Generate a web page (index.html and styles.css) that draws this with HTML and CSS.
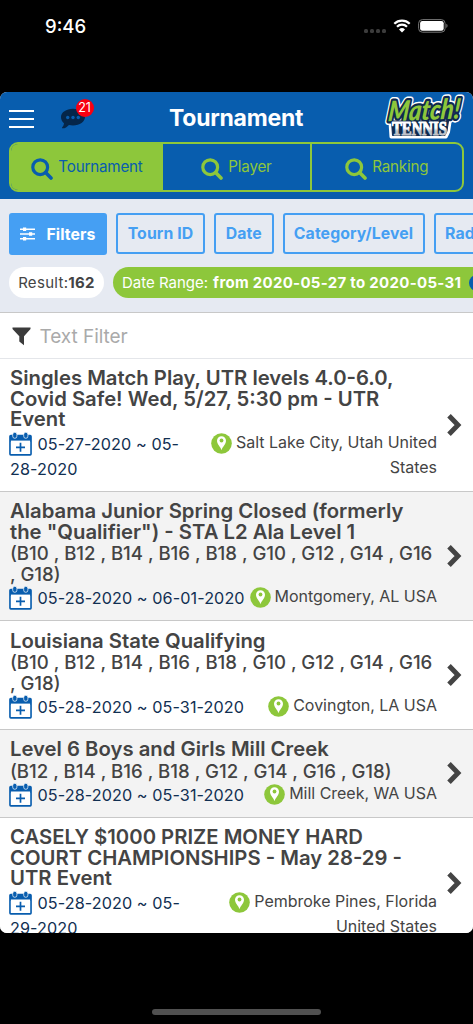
FILE: index.html
```html
<!DOCTYPE html>
<html lang="en">
<head>
<meta charset="utf-8">
<meta name="viewport" content="width=device-width, initial-scale=1">
<title>Tournament</title>
<link rel="stylesheet" href="styles.css">
</head>
<body>
<svg class="defs" aria-hidden="true">
  <symbol id="search" viewBox="0 0 22 22"><circle cx="9.2" cy="9.2" r="7.4" fill="none" stroke="currentColor" stroke-width="3.2"/><path d="M14.6 14.6 20 20" stroke="currentColor" stroke-width="3.6" stroke-linecap="round"/></symbol>
  <symbol id="calendar" viewBox="0 0 23 24"><path d="M1 3.2h21V10H1z" fill="#085dae"/><rect x="1" y="3.6" width="21" height="19.2" rx=".8" fill="none" stroke="#085dae" stroke-width="1.7"/><rect x="3.7" y=".3" width="4.2" height="6" rx="2.1" fill="#085dae" stroke="#fff" stroke-width=".7"/><rect x="14.7" y=".3" width="4.2" height="6" rx="2.1" fill="#085dae" stroke="#fff" stroke-width=".7"/><path d="M1.9 8.6h19.2v13.2H1.9z" fill="#fff"/><path d="M11.5 10.8v9M7 15.3h9" stroke="#085dae" stroke-width="1.7"/></symbol>
  <symbol id="pin" viewBox="0 0 21 21"><circle cx="10.5" cy="10.5" r="10.3" fill="#8dc73b"/><path d="M10.5 17.2C9.6 13.9 6 11.4 6 7.8a4.5 4.5 0 0 1 9 0c0 3.6-3.6 6.1-4.5 9.4z" fill="#fff"/><circle cx="10.5" cy="7.5" r="1.9" fill="#8dc73b"/></symbol>
  <symbol id="chevron" viewBox="0 0 15 22"><path d="M2 1.7 11 11 2 20.3" fill="none" stroke="#444" stroke-width="4.9"/></symbol>
</svg>
<header class="status">
  <span class="clock">9:46</span>
  <span class="indicators">
    <span class="cell"><i></i><i></i><i></i><i></i></span>
    <svg class="wifi" viewBox="0 0 18 14"><path d="M1.3 4.7a11 11 0 0 1 15.4 0M4 7.7a7.1 7.1 0 0 1 10 0" fill="none" stroke="#fff" stroke-width="2.2"/><path d="M9 13.5 6 10.4a4.3 4.3 0 0 1 6 0z" fill="#fff"/></svg>
    <svg class="battery" viewBox="0 0 31 14"><rect x=".6" y=".6" width="26.5" height="12.6" rx="3.8" fill="none" stroke="#777" stroke-width="1"/><rect x="2.1" y="2" width="23.6" height="9.8" rx="2.3" fill="#fff"/><path d="M28.3 4.8c1.7.7 1.7 3.5 0 4.2z" fill="#777"/></svg>
  </span>
</header>

<main class="app">
  <section class="top">
    <div class="bar">
      <span class="menu"><i></i><i></i><i></i></span>
      <span class="chat">
        <svg viewBox="0 0 26 22"><path d="M13 .8c6.8 0 12 3.6 12 8.2s-5.2 8.4-12 8.4c-1.5 0-2.8-.2-4.1-.5-1.8 2-4 3.5-6.4 3.4-.6 0-.8-.5-.4-.9 1-1 1.7-2.4 1.900-4.200C2 13.600 1 11.500 1 9 1 4.400 6.200.8 13 .8z" fill="#05264a"/><g fill="#085dae"><circle cx="7.700" cy="9.500" r="1.700"/><circle cx="13" cy="9.500" r="1.700"/><circle cx="18.300" cy="9.500" r="1.700"/></g></svg>
        <b class="badge">21</b>
      </span>
      <h1>Tournament</h1>
      <svg class="logo" viewBox="0 0 84 46">
        <defs>
          <linearGradient id="steel" x1="0" y1="0" x2="0" y2="1"><stop offset=".45" stop-color="#fff"/><stop offset=".6" stop-color="#bfc2c9"/></linearGradient>
        </defs>
        <path d="M10 29h60l-1.500 10-2.500 5H11z" fill="#fff" stroke="#fff" stroke-width="3" stroke-linejoin="round"/>
        <text x="7" y="27" class="script" transform="rotate(-2 40 20) translate(4 0) skewX(-8)" textLength="72" lengthAdjust="spacingAndGlyphs" stroke="#fff" stroke-width="7.500" fill="#fff">Match!</text>
        <path d="M11.500 28h57l-1.500 10-2 4.500H12.500z" fill="#10294f" stroke="#10294f" stroke-linejoin="round"/>
        <text x="7" y="27" class="script" transform="rotate(-2 40 20) translate(4 0) skewX(-8)" textLength="72" lengthAdjust="spacingAndGlyphs" stroke="#10294f" stroke-width="4.500" fill="#10294f">Match!</text>
        <text x="12" y="42" class="tennis" textLength="55" lengthAdjust="spacingAndGlyphs" fill="url(#steel)" stroke="url(#steel)" stroke-width="1.100">TENNIS</text>
        <text x="7" y="27" class="script" transform="rotate(-2 40 20) translate(4 0) skewX(-8)" textLength="72" lengthAdjust="spacingAndGlyphs" fill="#8dc73b">Match!</text>
      </svg>
    </div>
    <nav class="tabs">
      <span class="tab on"><svg><use href="#search"/></svg><span>Tournament</span></span>
      <span class="tab"><svg><use href="#search"/></svg><span>Player</span></span>
      <span class="tab last"><svg><use href="#search"/></svg><span>Ranking</span></span>
    </nav>
  </section>

  <section class="filters">
    <div class="buttons">
      <span class="btn primary"><svg viewBox="0 0 15 14"><path d="M0 2.300h15M0 7h15M0 11.700h15" stroke="#fff" stroke-width="1.400"/><path d="M3 .5h3.200v3.600H3zM9 5.200h3.200v3.600H9zM3 9.900h3.200v3.600H3z" fill="#fff"/></svg>Filters</span>
      <span class="btn b-id">Tourn ID</span>
      <span class="btn b-date">Date</span>
      <span class="btn b-cat">Category/Level</span>
      <span class="btn b-rad">Radius</span>
    </div>
    <div class="chips">
      <span class="chip result">Result:<b>162</b></span>
      <span class="chip range"><span>Date Range:</span><b>from 2020-05-27 to 2020-05-31</b><i></i></span>
    </div>
  </section>

  <div class="search"><svg viewBox="0 0 19 19"><path d="M.5.500h18v1.600L12 9.200v9L7.300 14.500V9.200L.500 2.100z" fill="#3b3b3b"/></svg><span>Text Filter</span></div>

  <article class="row r1">
    <div class="body">
      <h2><span>Singles Match Play, UTR levels 4.0-6.0,</span><span>Covid Safe! Wed, 5/27, 5:30 pm - UTR</span><span>Event</span></h2>
      <div class="meta"><p class="date"><svg><use href="#calendar"/></svg>05-27-2020 ~ 05-<br>28-2020</p><p class="place"><svg><use href="#pin"/></svg>Salt Lake City, Utah United<br>States</p></div>
    </div>
    <svg class="chev"><use href="#chevron"/></svg>
  </article>
  <article class="row r2 alt">
    <div class="body">
      <h2><span>Alabama Junior Spring Closed (formerly</span><span>the "Qualifier") - STA L2 Ala Level 1</span></h2>
      <h3>(B10 , B12 , B14 , B16 , B18 , G10 , G12 , G14 , G16<br>, G18)</h3>
      <div class="meta"><p class="date"><svg><use href="#calendar"/></svg>05-28-2020 ~ 06-01-2020</p><p class="place"><svg><use href="#pin"/></svg>Montgomery, AL USA</p></div>
    </div>
    <svg class="chev"><use href="#chevron"/></svg>
  </article>
  <article class="row r3">
    <div class="body">
      <h2><span>Louisiana State Qualifying</span></h2>
      <h3>(B10 , B12 , B14 , B16 , B18 , G10 , G12 , G14 , G16<br>, G18)</h3>
      <div class="meta"><p class="date"><svg><use href="#calendar"/></svg>05-28-2020 ~ 05-31-2020</p><p class="place"><svg><use href="#pin"/></svg>Covington, LA USA</p></div>
    </div>
    <svg class="chev"><use href="#chevron"/></svg>
  </article>
  <article class="row r4 alt">
    <div class="body">
      <h2><span>Level 6 Boys and Girls Mill Creek</span></h2>
      <h3>(B12 , B14 , B16 , B18 , G12 , G14 , G16 , G18)</h3>
      <div class="meta"><p class="date"><svg><use href="#calendar"/></svg>05-28-2020 ~ 05-31-2020</p><p class="place"><svg><use href="#pin"/></svg>Mill Creek, WA USA</p></div>
    </div>
    <svg class="chev"><use href="#chevron"/></svg>
  </article>
  <article class="row r5">
    <div class="body">
      <h2><span>CASELY $1000 PRIZE MONEY HARD</span><span>COURT CHAMPIONSHIPS - May 28-29 -</span><span>UTR Event</span></h2>
      <div class="meta"><p class="date"><svg><use href="#calendar"/></svg>05-28-2020 ~ 05-<br>29-2020</p><p class="place"><svg><use href="#pin"/></svg>Pembroke Pines, Florida<br>United States</p></div>
    </div>
    <svg class="chev"><use href="#chevron"/></svg>
  </article>
</main>
<div class="home"></div>
</body>
</html>
```

FILE: styles.css
```css
* { box-sizing: border-box; margin: 0; padding: 0; }
html, body { width: 473px; height: 1024px; overflow: hidden; background: #000; }
body { font-family: Inter, "Liberation Sans", sans-serif; display: flex; flex-direction: column; color: #444; }
.defs { position: absolute; width: 0; height: 0; }

.status { height: 92px; flex: none; padding: 16px 25px 0 45px; display: flex; justify-content: space-between; align-items: flex-start; color: #fff; }
.clock { font-size: 18.5px; line-height: 21px; font-weight: 500; letter-spacing: 0; }
.indicators { display: flex; align-items: flex-start; padding-top: 3px; }
.cell { display: flex; gap: 2px; padding-top: 10px; margin-right: 7px; }
.cell i { width: 4px; height: 4px; border-radius: 1.500px; background: #3c3c3c; }
.wifi { width: 18px; height: 14px; margin-right: 7px; }
.battery { width: 31px; height: 14px; margin-right: -1px; }

.app { height: 840.500px; flex: none; border-radius: 7px; overflow: hidden; background: #fff; display: flex; flex-direction: column; }
.top { height: 107px; flex: none; background: #085dae; padding: 0 9px; }
.bar { height: 50px; display: flex; position: relative; }
.menu { width: 25px; margin-top: 18px; display: flex; flex-direction: column; gap: 6px; }
.menu i { height: 2px; background: #fff; }
.chat { position: relative; margin: 16px 0 0 26px; }
.chat svg { display: block; width: 26px; height: 22px; }
.badge { position: absolute; left: 15.500px; top: -9.500px; width: 18px; height: 18px; border-radius: 50%; background: #f80011; color: #fff; font-size: 12.500px; line-height: 18px; font-weight: 400; text-align: center; }
.bar h1 { margin-left: 83px; font-size: 23px; line-height: 52px; font-weight: 650; color: #fff; letter-spacing: -.25px; }
.logo { position: absolute; right: 0; top: 1px; width: 84px; height: 46px; overflow: visible; stroke-linejoin: round; }
.script { font-family: Lato, sans-serif; font-weight: 900; font-style: italic; font-size: 28px; }
.tennis { font-family: "Liberation Serif", serif; font-weight: 700; font-size: 18px; }

.tabs { height: 50px; display: flex; border: 2px solid #8dc73b; border-radius: 9px; overflow: hidden; width: 454.500px; }
.tab { flex: 0 0 147px; display: flex; justify-content: center; align-items: center; color: #8dc73b; font-size: 15.200px; letter-spacing: -.2px; padding-bottom: 1px; }
.tab.on { background: #8dc73b; color: #085dae; flex-basis: 152px; }
.tab.last { flex: 1; border-left: 2px solid #8dc73b; }
.tab svg { width: 22px; height: 22px; margin: 5px 5px 0 0; }

.filters { height: 114px; flex: none; padding: 14px 0 0 9px; background: #e6eaf2; border-bottom: 1px solid #c8c8c8; overflow: hidden; }
.buttons, .chips { display: flex; gap: 9px; width: 640px; }
.btn { height: 41px; border: 2px solid #459ff3; border-radius: 3px; color: #459ff3; font-size: 15.800px; font-weight: 650; letter-spacing: .1px; display: flex; justify-content: center; align-items: center; }
.btn.primary { width: 98px; height: 42px; background: #459ff3; color: #fff; gap: 11px; }
.btn.primary svg { width: 15px; height: 14px; }
.b-id { width: 89px; } .b-date { width: 59.500px; } .b-cat { width: 142px; } .b-rad { width: 76px; }
.chips { margin-top: 12px; }
.chip { height: 31px; border-radius: 16px; display: flex; align-items: center; font-size: 15px; }
.result { width: 95px; background: #fff; justify-content: center; letter-spacing: .3px; }
.range { background: #8dc73b; color: #fff; padding-left: 9px; width: 500px; }
.range b { margin-left: 5px; letter-spacing: .3px; }
.range i { width: 16px; height: 16px; border-radius: 50%; background: #085dae; margin-left: 8px; }
.chip b { font-weight: 650; }

.search { height: 46px; flex: none; display: flex; align-items: center; padding: 1px 0 0 11.500px; border-bottom: 1px solid #e4e6ea; font-size: 19px; letter-spacing: -.05px; color: #aaa; }
.search svg { width: 19px; height: 19px; margin-right: 9px; }

.row { flex: none; display: flex; align-items: center; border-bottom: 1px solid #c8c8c8; padding-right: 11px; background: #fff; }
.row.alt { background: #f3f3f3; }
.r1, .r5 { height: 132.500px; } .r2 { height: 129.800px; } .r3 { height: 108.300px; } .r4 { height: 88px; }
.body { align-self: stretch; width: 427px; margin-left: 10px; padding-top: 9.500px; white-space: nowrap; }
.r1 .body { padding-top: 9px; }
.chev { width: 15px; height: 22px; margin-left: auto; }
h2 { font-size: 20.300px; line-height: 20.600px; font-weight: 630; letter-spacing: 0; }
h2 span { display: block; width: max-content; }
h3 { font-size: 18.600px; line-height: 20.700px; font-weight: 540; padding-top: 1px; margin-bottom: -1px; }
.meta { display: flex; justify-content: space-between; font-size: 16px; line-height: 25px; padding-top: 2.500px; }
.date { color: #112f52; font-size: 16.200px; letter-spacing: .08px; }
.date svg { width: 23px; height: 24px; margin: 0 5.500px 0 -1px; vertical-align: -6px; }
.date, .place { height: 50px; }
.place { text-align: right; margin-top: -2px; letter-spacing: -.02px; }
.place svg { width: 21px; height: 21px; margin-right: 4px; vertical-align: -6px; }

.home { width: 169px; height: 6px; border-radius: 3px; background: #505050; margin: 76px auto 0; }
```
